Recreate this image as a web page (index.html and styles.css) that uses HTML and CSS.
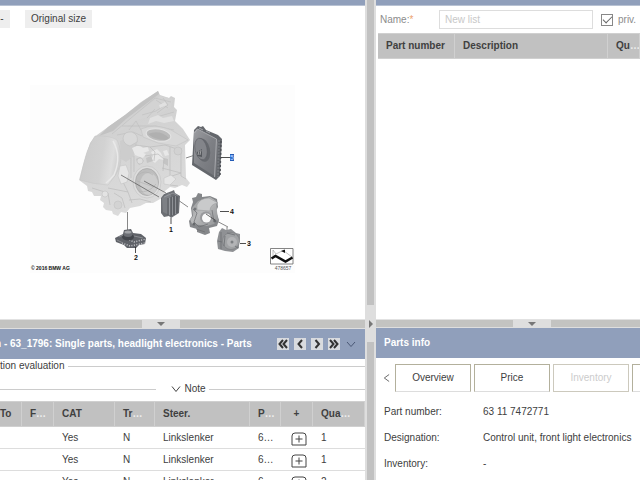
FILE: index.html
```html
<!DOCTYPE html>
<html lang="en">
<head>
<meta charset="utf-8">
<title>Parts catalogue</title>
<link rel="stylesheet" href="styles.css">
</head>
<body>
<main class="workspace">
  <div class="column column-left">
    <section class="pane pane-drawing">
      <div class="strip"></div>
      <div class="toolbar">
        <button class="tool tool-minus" type="button">-</button>
        <button class="tool" type="button">Original size</button>
      </div>
      <figure class="drawing">
        <svg viewBox="30 85 265 188" role="img" aria-label="Headlight electronics">
          <defs>
            <linearGradient id="lens" x1="0" y1="0" x2="1" y2="0.2">
              <stop offset="0" stop-color="#cbcbcb"/><stop offset="0.6" stop-color="#d2d2d2"/><stop offset="0.85" stop-color="#dedede"/><stop offset="1" stop-color="#d0d0d0"/>
            </linearGradient>
            <linearGradient id="shell" x1="0" y1="0" x2="0.3" y2="1">
              <stop offset="0" stop-color="#cccccc"/><stop offset="1" stop-color="#dbdbdb"/>
            </linearGradient>
            <linearGradient id="metal" x1="0" y1="0" x2="1" y2="1">
              <stop offset="0" stop-color="#9b9ca0"/><stop offset="0.5" stop-color="#7e8085"/><stop offset="1" stop-color="#707277"/>
            </linearGradient>
            <linearGradient id="cast" x1="0" y1="0" x2="1" y2="1">
              <stop offset="0" stop-color="#8e9092"/><stop offset="0.45" stop-color="#b9babb"/><stop offset="1" stop-color="#929496"/>
            </linearGradient>
          </defs>
          <rect x="30" y="85" width="265" height="188" fill="#fdfdfd"/>

          <!-- headlight housing -->
          <path fill="url(#shell)" d="M158 91L160 95 169 98 171 96 175 98 174 107 177 110 175 121 183 129 190 140 185 145 186 178 190 183 187 187 182 185 175 188 170 187 165 191 162 198 153 203 146 203 140 206 130 208 126 213 121 212 118 216 113 214 112 211 106 210 103 207 104 203 100 200 101 196 94 196 92 192 88 191 87 186 79 180 83 165 90 143 97 135 108 127 125 115 141 102z"/>
          <path fill="#c2c2c2" d="M158 91l1 3-33 25-13 12-14 5 9-9 17-12 17-13z"/>
          <path fill="#d3d3d3" d="M160 96l13 3-2 9-16 8-18 4-13 9-15 7 20-17z"/>
          <g fill="none" stroke="#bdbdbd" stroke-width=".6">
            <path d="M112 134l43-36 16 4M122 126h34l18 4M129 130l7-9 5 9M153 118l21-6M156 100l12 8M142 115l14-4 9-6M163 98l5 7-11 8M147 118l8-9M117 135l16-3 9 4"/>
          </g>
          <path fill="#e1e1e1" d="M150 118l8-3 5 3 9-2 2 5-10 2-8-2-8 3zM159 105l6-3 2 3-7 3z"/>
          <path fill="url(#lens)" stroke="#c4c4c4" stroke-width=".5" d="M95 136q14-1 22 4 6 12 3 26-3 9-12 19-16-1-28-5 4-19 7-28 4-11 8-16z"/>
          <path stroke="#e9e9e9" stroke-width="1.500" fill="none" d="M113 141q9 15 1 34-4 5-8 8"/>
          <path fill="#cdcdcd" d="M120 141l11-5 7 5-2 6-2 9-8 6-5-3z"/>
          <path fill="#d9d9d9" stroke="#bfbfbf" stroke-width=".6" d="M123 138q1-7 9-6 7 3 5 10l-7 4q-7-2-7-8z"/>
          <path d="M141 129q13-6 30 1l17 10-12 6-18-3-15-6z" fill="#d8d8d8" stroke="#c2c2c2" stroke-width=".6"/>
          <ellipse cx="158.500" cy="135" rx="12.500" ry="6" transform="rotate(10 158.500 135)" fill="#bbbbbb" stroke="#e4e4e4"/>
          <path fill="#b0b0b0" d="M148 134q12-5 21 4l-3 2q-11 0-18-6z"/>
          <path fill="#e8e8e8" d="M132 148l7-3 4 3 5-1 1 4-6 2-3 4-5-2zM151 152l6-3 4 4 3 7-5-1-4 4-4-3 2-4zM141 152l5 2-3 4-5-2zM163 151l4-1 2 5-4 1z"/>
          <path fill="#c4c4c4" d="M136 159l4-2 4 4-5 4zM146 158l5-2 2 5-6 2zM164 158l4 1v7l-5-3z"/>
          <g fill="none" stroke="#bcbcbc" stroke-width=".7">
            <path d="M135 145l15 2 15-2 15 5M145 156l13-2 6 5-1 12M150 147l5 5-1 9M170 147v38l8 1M181 148v28l5 3M162 168l19 5M166 178l15-5M124 166l-3 12 7 14M108 188l20 4 4 11M129 200l11-1 11 3M114 193l8 5 3 10M92 188l16 5 2 12M131 158v20M134 156v16"/>
          </g>
          <circle cx="178" cy="151" r="4" fill="#d2d2d2" stroke="#c0c0c0" stroke-width=".6"/>
          <circle cx="140" cy="161" r="3" fill="#dddddd" stroke="#bfbfbf" stroke-width=".6"/>
          <circle cx="118" cy="205" r="4" fill="#d3d3d3" stroke="#c3c3c3" stroke-width=".6"/>
          <circle cx="105" cy="194" r="3" fill="#e3e3e3" stroke="#c3c3c3" stroke-width=".6"/>
          <ellipse cx="147" cy="182" rx="14" ry="16" fill="#dddddd" stroke="#c6c6c6" stroke-width=".7"/>
          <ellipse cx="147" cy="182" rx="11.500" ry="13.500" fill="#bdbdbd" stroke="#a6a6a6" stroke-width=".7"/>
          <ellipse cx="149" cy="184" rx="9" ry="11" fill="#cdcdcd"/>
          <path stroke="#b0b0b0" stroke-width=".6" fill="none" d="M138 175q7-6 15 0M139 191q9 3 17-7M137 181l17 6"/>
          <path fill="#e6e6e6" stroke="#c0c0c0" stroke-width=".5" d="M120 166l6-1 3 8-2 9-6 2-3-8zM164 178l7-3 5 4-6 6-6-1z"/>

          <!-- assembly axes -->
          <path stroke="#555" stroke-width=".7" fill="none" d="M121 175l38 22M144 181l22 12M178 200l10 7M186 158l12-4M127.500 212v20M211 218l17 9M227 227v5"/>

          <!-- control unit 5 -->
          <path fill="#64676c" d="M194 130l4-4 3 1 2-1 3 4 12 5 4 4-2 37-4 4-24-15z"/>
          <path fill="url(#metal)" d="M194 132l3-3 20 10 1 4-2 34-22-14z"/>
          <path stroke="#b2b4b7" stroke-width=".8" fill="none" d="M194.500 133l3-4 19 10-2 38M199 128l4 2M206 131l4 2"/>
          <ellipse cx="203" cy="150" rx="7" ry="12" transform="rotate(-12 203 150)" fill="#66696e"/>
          <ellipse cx="201" cy="149" rx="6" ry="11" transform="rotate(-12 201 149)" fill="#83858a" stroke="#5e6066" stroke-width=".6"/>
          <path fill="#55585d" d="M197 152l5-3v8l-5-1z"/>
          <path stroke="#c0c0c0" fill="none" stroke-width=".7" d="M198 155l1-4M200 155l1-5"/>
          <path stroke="#74777c" stroke-width="2" stroke-dasharray="2 1" fill="none" d="M219 140l-1 37"/>
          <path stroke="#4e5157" stroke-width="1.500" stroke-dasharray="2 2" fill="none" d="M221 141l-1 34"/>

          <!-- module 1 -->
          <path fill="#6c6f74" d="M161 198l3-4 8-3 2-1 1 3 5 3-1 17-8 5-2-2-5 1-3-4z"/>
          <path fill="#7d8085" d="M162 198l7-5 2 2v21l-8-4z"/>
          <path fill="none" stroke="#4b4e54" stroke-width=".8" d="M168 198v17M171 197v19M174 196v19M177 195v18"/>
          <path fill="none" stroke="#a6a8ac" stroke-width=".6" d="M164 197l9-4 5 3M169.500 198v17M172.500 197v18M175.500 196v18"/>

          <!-- module 2 -->
          <path fill="#5f6268" d="M115 238l8-4 1-4 7-1 2 4 8 1 5 4-1 6-6 1-3 3h-9l-3-3-8-3z"/>
          <path stroke="#c8c9cc" stroke-width="1.500" stroke-dasharray="1 1.500" fill="none" d="M122 243l8 3 15-3M127 239l7 3 12-3"/>
          <ellipse cx="128" cy="237" rx="6" ry="3.500" fill="#43464c"/>
          <ellipse cx="128" cy="234" rx="4.500" ry="3" fill="#6b6e74"/>
          <ellipse cx="128" cy="232" rx="3.500" ry="1.500" fill="#a1a3a7"/>
          <path stroke="#8a8c91" stroke-width="1" fill="none" d="M117 240l6 3M119 237l4-2M134 236l9 2"/>

          <!-- bracket 4 -->
          <path fill="#85878a" d="M192 198l4-1 2-4 4 1v3l8-1 7 3 1 8-2 4 3 9-2 6-8 2 1 5-5 2-8-3v-3l-7-2-1-6 3-5-1-8 2-6z"/>
          <path fill="url(#cast)" d="M192 208l6-7 12-4 6 4 1 10 1 9-4 4-7 2-15-2-2-5 3-3z"/>
          <path fill="#c9cacb" d="M197 205q3-7 12-7l9 5q-8 1-8 8l-13-1z" stroke="#9c9ea0" stroke-width=".6"/>
          <circle cx="206" cy="217.500" r="6" fill="#98999c"/>
          <circle cx="206.500" cy="218" r="4.500" fill="#fafafa"/>
          <path stroke="#6b6d70" fill="none" stroke-width=".7" d="M193 209l4 4-3 9 5 5 9-3M212 210l2 12M196 229l9 3"/>
          <circle cx="194" cy="224" r="1.500" fill="#66696c"/>
          <circle cx="215" cy="221" r="1.500" fill="#686b6e"/>
          <circle cx="195" cy="209" r="1.500" fill="#74767a"/>
          <path stroke="#444" stroke-width=".8" fill="none" d="M206 214l9 6"/>

          <!-- motor 3 -->
          <path fill="#8f9194" d="M219 232l3-4 4 2 5-1 5 4 4 1v5l-1 4v5l-6 4-8-1-7-2-1-8z"/>
          <circle cx="231" cy="241" r="8.500" fill="#a0a2a4" stroke="#7c7e81" stroke-width=".7"/>
          <circle cx="232" cy="242" r="5" fill="#b3b4b6"/>
          <circle cx="232" cy="242" r="1.500" fill="#7c7f82"/>
          <path stroke="#6c6f72" fill="none" stroke-width=".8" d="M221 232v17M225 236l-1 10M227 233l8 2M235 246l3 2M218 241l4 1"/>

          <!-- callouts -->
          <path stroke="#222" stroke-width=".8" fill="none" d="M221 157.500h9M220 211.500h9M240 243.500h6M171 218v6M135.500 247v6"/>
          <rect x="230" y="154" width="4" height="7" fill="#235bb5"/>
          <g class="callouts"><text x="232" y="160" fill="#9bc0ff">5</text><text x="232" y="214">4</text><text x="249" y="246">3</text><text x="171" y="232">1</text><text x="136" y="260">2</text></g>
          <text class="copyright" x="31" y="270">© 2016 BMW AG</text>
          <path d="M270.500 248.500h22.500v15.500h-22.500z" fill="#fff" stroke="#666" stroke-width=".8"/>
          <path d="M273 256v-6M273 250l3 4M284 251l8 6M276 254l8-4" fill="none" stroke="#999" stroke-width=".6"/>
          <path d="M271.500 258.500l4-2.500 10 5.500 7-4" fill="none" stroke="#111" stroke-width="2.500"/>
          <path d="M281 251l4-1.500v3.500z" fill="#111"/>
          <text class="drawing-number" x="283" y="270">478657</text>
        </svg>
      </figure>
    </section>

    <div class="splitter splitter-left"><span class="grip"></span></div>

    <section class="pane pane-parts">
      <header class="title-bar parts-title">
        <h2>n - 63_1796: Single parts, headlight electronics - Parts</h2>
        <div class="nav">
          <button type="button" aria-label="First"><svg viewBox="0 0 12 12"><path d="M6 2L2.500 6 6 10M10 2L6.500 6 10 10"/></svg></button>
          <button type="button" aria-label="Previous"><svg viewBox="0 0 12 12"><path d="M8 2L4.500 6 8 10"/></svg></button>
          <button type="button" aria-label="Next"><svg viewBox="0 0 12 12"><path d="M4.500 2L8 6l-3.500 4"/></svg></button>
          <button type="button" aria-label="Last"><svg viewBox="0 0 12 12"><path d="M2 2l3.500 4L2 10M6 2l3.500 4L6 10"/></svg></button>
          <button class="more" type="button" aria-label="More"><svg viewBox="0 0 12 12"><path d="M2 4l4 4.500L10 4"/></svg></button>
        </div>
      </header>
      <div class="legend"><span>tion evaluation</span></div>
      <div class="legend note"><button type="button"><svg viewBox="0 0 10 8"><path d="M1 1.500l4 5 4-5"/></svg>Note</button></div>
      <table class="grid parts">
        <thead>
          <tr><th class="c-to">To</th><th class="c-f">F<i>…</i></th><th class="c-cat">CAT</th><th class="c-tr">Tr<i>…</i></th><th class="c-steer">Steer.</th><th class="c-p">P<i>…</i></th><th class="c-add">+</th><th>Qua<i>…</i></th></tr>
        </thead>
        <tbody>
          <tr><td></td><td></td><td>Yes</td><td>N</td><td>Linkslenker</td><td>6…</td><td class="c-add"><button class="add" type="button" aria-label="Add"><svg viewBox="0 0 16 14"><path d="M1 13V4q0-3 3-3h8q3 0 3 3v9zM8 3.500v7M4.500 7h7"/></svg></button></td><td>1</td></tr>
          <tr><td></td><td></td><td>Yes</td><td>N</td><td>Linkslenker</td><td>6…</td><td class="c-add"><button class="add" type="button" aria-label="Add"><svg viewBox="0 0 16 14"><path d="M1 13V4q0-3 3-3h8q3 0 3 3v9zM8 3.500v7M4.500 7h7"/></svg></button></td><td>1</td></tr>
          <tr><td></td><td></td><td>Yes</td><td>N</td><td>Linkslenker</td><td>6…</td><td class="c-add"><button class="add" type="button" aria-label="Add"><svg viewBox="0 0 16 14"><path d="M1 13V4q0-3 3-3h8q3 0 3 3v9zM8 3.500v7M4.500 7h7"/></svg></button></td><td>2</td></tr>
        </tbody>
      </table>
    </section>
  </div>

  <div class="divider"><span class="bar bar-top"></span><span class="handle"></span><span class="bar bar-bottom"></span></div>

  <div class="column column-right">
    <section class="pane pane-list">
      <div class="strip"></div>
      <form class="list-form">
        <label class="name-label" for="list-name">Name:<b>*</b></label>
        <input class="name-input" id="list-name" type="text" placeholder="New list">
        <input class="check" id="private" type="checkbox" checked>
        <label for="private">priv.</label>
      </form>
      <table class="grid list">
        <thead><tr><th class="c-number">Part number</th><th>Description</th><th class="c-qty">Qu<i>…</i></th></tr></thead>
      </table>
    </section>

    <div class="splitter splitter-right"><span class="grip"></span></div>

    <section class="pane pane-info">
      <header class="title-bar info-title"><h2>Parts info</h2></header>
      <nav class="tabs">
        <button class="back" type="button" aria-label="Scroll tabs"><svg viewBox="0 0 8 10"><path d="M7 1L1.500 5 7 9"/></svg></button>
        <button class="tab" type="button">Overview</button>
        <button class="tab" type="button">Price</button>
        <button class="tab" type="button" disabled>Inventory</button>
        <button class="tab" type="button" aria-label="Next tab"></button>
      </nav>
      <dl class="details">
        <dt>Part number:</dt><dd>63 11 7472771</dd>
        <dt>Designation:</dt><dd>Control unit, front light electronics</dd>
        <dt>Inventory:</dt><dd>-</dd>
      </dl>
    </section>
  </div>
</main>
</body>
</html>
```

FILE: styles.css
```css
* { box-sizing: border-box; }

body {
  margin: 0;
  font: 10px/12px "Liberation Sans", Arial, sans-serif;
  color: #404040;
  background: #fff;
}

button, input {
  margin: 0;
  padding: 0;
  border: 0;
  font: inherit;
  color: inherit;
  background: none;
}

svg { display: block; }

.workspace {
  display: grid;
  grid-template-columns: minmax(0, 365fr) 11px minmax(0, 264fr);
  height: 100vh;
  overflow: hidden;
}

.column { display: grid; min-height: 0; }
.column-left { grid-template-rows: minmax(0, 319fr) 10px minmax(0, 151fr); }
.column-right { grid-template-rows: minmax(0, 319fr) 9px minmax(0, 152fr); }
.pane { min-width: 0; overflow: hidden; }

.strip {
  height: 6px;
  background: #909fbb;
  border-bottom: 1px solid #b8c2d3;
}

/* Drawing pane */
.toolbar { display: flex; gap: 15px; padding-top: 4px; }
.tool { height: 18px; padding: 0 6px; background: #eee; }
.tool-minus { width: 10px; padding: 0 6px 0 0; }
.drawing { margin: 57px 0 0 30px; }
.drawing svg { width: 265px; max-width: 100%; }
.callouts { font-size: 7px; font-weight: bold; text-anchor: middle; fill: #111; }
.copyright { font-family: "Liberation Sans Narrow", "Liberation Sans", sans-serif; font-size: 5px; font-weight: bold; fill: #111; }
.drawing-number { font-size: 5px; text-anchor: middle; fill: #555; }

/* Splitters */
.splitter {
  display: flex;
  justify-content: center;
  background: #c3c3c1;
  border-top: 1px solid #e2e2e2;
  border-bottom: 1px solid #dedede;
}
.splitter-left { padding-right: 44px; }
.splitter-right { padding-left: 48px; }
.splitter-left, .splitter-right { padding-top: 0; }
.grip { display: flex; align-items: center; justify-content: center; width: 38px; background: #dedede; }
.grip::after {
  content: "";
  border: 4px solid transparent;
  border-top-color: #777;
  border-bottom: 0;
}
.divider { display: grid; grid-template-rows: minmax(0, 305fr) 37px minmax(0, 138fr); background: #dedede; }
.bar { margin: 0 2px; background: #c1c1c1; }
.handle { display: flex; align-items: center; justify-content: center; }
.handle::after {
  content: "";
  border: 4px solid transparent;
  border-left-color: #777;
  border-right: 0;
}

/* Title bars */
.title-bar { display: flex; align-items: center; height: 30px; background: #909fbb; color: #fff; }
.title-bar h2 { margin: 0; font-size: 10px; white-space: nowrap; }
.parts-title { justify-content: space-between; padding-right: 8px; }
.parts-title h2 { margin-left: -5px; }
.info-title { padding-left: 8px; }
.nav { display: flex; gap: 5px; }
.nav button { background: #d9dbdf; }
.nav svg { width: 12px; height: 12px; fill: none; stroke: #333; stroke-width: 2; }
.nav .more { background: none; }
.nav .more svg { stroke: #4a5875; stroke-width: 1; }

/* Section legends */
.legend { display: flex; align-items: center; gap: 3px; height: 14px; white-space: nowrap; }
.legend::after { content: ""; flex: 1; height: 1px; background: #ccc; }
.note { margin: 9px 0 5px; }
.note::before { content: ""; flex: 1; height: 1px; margin-right: 12px; background: #ccc; }
.note button { display: flex; align-items: center; gap: 3px; }
.note svg { width: 10px; height: 8px; fill: none; stroke: #444; }

/* Tables */
.grid { width: 100%; border-collapse: separate; border-spacing: 0; table-layout: fixed; }
.grid th, .grid td { padding: 0 0 0 8px; text-align: left; white-space: nowrap; overflow: hidden; }
.grid th { height: 26px; background: #c1c1c1; border: solid #d0d0d0; border-width: 1px 1px 1px 0; }
.grid td { height: 22px; border-bottom: 1px solid #ddd; }
.grid i { font-style: normal; color: #eee; }
.grid .c-to { width: 22px; padding-left: 0; }
.c-f { width: 32px; }
.c-cat { width: 61px; }
.c-tr { width: 40px; }
.c-steer { width: 95px; }
.c-p { width: 31px; }
.grid .c-add { width: 32px; padding: 0; text-align: center; }
.grid td.c-add { padding-left: 4px; }
.add { display: block; margin: 2px auto 0; }
.add svg { width: 16px; height: 14px; fill: none; stroke: #444; }
.c-number { width: 77px; }
.c-qty { width: 32px; }

/* List form */
.list-form { display: flex; align-items: center; height: 27px; padding-left: 4px; color: #8c8c8c; white-space: nowrap; }
.name-label { width: 59px; }
.name-label b { font-weight: normal; color: #eda36e; }
.name-input { flex: 1; min-width: 0; height: 19px; padding: 0 5px; border: 1px solid #ddd; }
.name-input::placeholder { color: #c8c8c8; opacity: 1; }
.check { appearance: none; display: grid; place-items: center; width: 12px; height: 12px; margin: 0 5px 0 8px; border: 1px solid #888; }
.check:checked::after { content: ""; width: 8px; height: 4px; margin-bottom: 2px; border: solid #666; border-width: 0 0 1px 1px; transform: rotate(-45deg); }
.list-form label:last-child { width: 22px; }
.list { padding-left: 2px; }

/* Parts info */
.tabs { display: flex; gap: 3px; padding: 6px 0 0 7px; }
.back { flex: none; width: 9px; }
.back svg { width: 7px; height: 10px; fill: none; stroke: #555; }
.tab { flex: none; width: 76px; height: 28px; border: 1px solid #b3b09c; border-bottom-color: #ddd; }
.tab:disabled { color: #ccc; border-color: #ccc9bd; }
.details { display: grid; grid-template-columns: 99px 1fr; row-gap: 14px; margin: 14px 0 0; padding-left: 8px; white-space: nowrap; }
.details dd { margin: 0; }
```
